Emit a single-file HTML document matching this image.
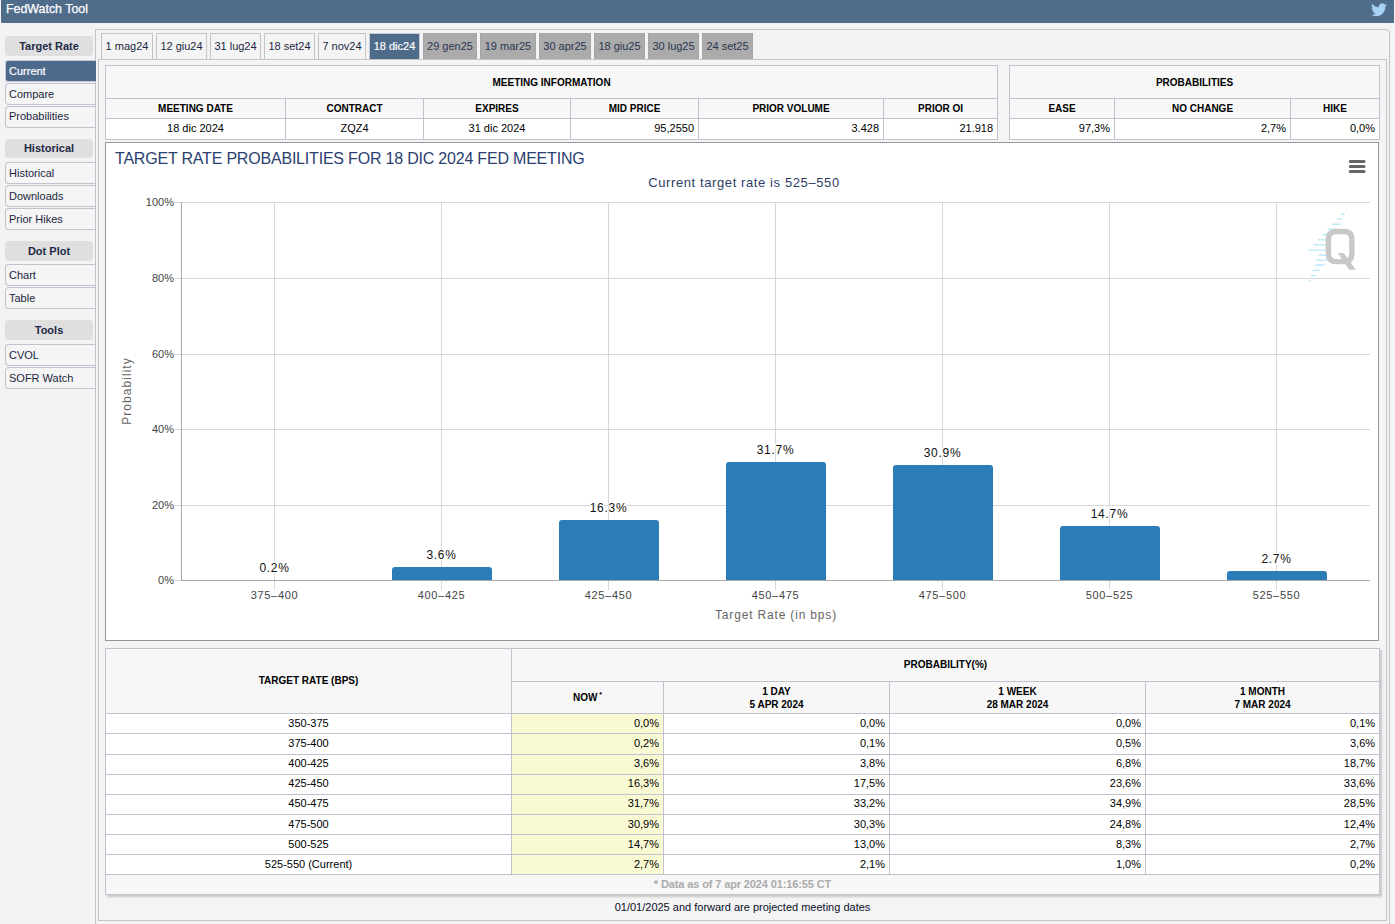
<!DOCTYPE html>
<html><head><meta charset="utf-8">
<style>
*{box-sizing:border-box;margin:0;padding:0}
html,body{width:1395px;height:924px;overflow:hidden;background:#F3F3F3;font-family:"Liberation Sans",sans-serif;font-size:11px;color:#000}
.abs{position:absolute}
#hdr{left:1px;top:0;width:1393px;height:23px;background:#506C8B;border-radius:0 0 1px 1px;color:#fff;font-size:12.4px;font-weight:normal;line-height:19px;padding-left:5px;-webkit-text-stroke:0.25px #fff}
.sh{position:absolute;left:5px;width:88px;height:20px;background:#DFDFDF;border-radius:4px;text-align:center;font-weight:bold;color:#1E2A48;line-height:20px;font-size:11px}
.si{position:absolute;left:5px;width:91px;height:22px;background:#F5F5F5;border:1px solid #C0C4D1;border-right:none;border-radius:4px 0 0 4px;z-index:1;color:#1B2740;padding-left:3px;line-height:21px;font-size:11px}
.si.act{background:#4E6A8B;border-color:#44638A;color:#fff;z-index:3;-webkit-text-stroke:0.2px #fff}
#outer{left:95px;top:29px;width:1295px;height:910px;border:1px solid #C0C4D1;border-radius:0 4px 0 0;background:#F3F3F3}
#oline{left:95px;top:29px;width:1px;height:900px;background:#C0C4D1;z-index:2}
#inner{left:98px;top:59px;width:1289px;height:862px;border:1px solid #C4C4C4;background:#F4F4F4}
.tab{position:absolute;top:33px;height:27px;border:1px solid #C4C4C4;border-bottom:none;background:#F4F4F4;color:#1C2842;text-align:center;line-height:25px;font-size:11px}
.tab.act{background:#4F6B8A;border-color:#C3CCD8;color:#fff;line-height:25px;-webkit-text-stroke:0.2px #fff}
.tab.g{background:#ABABAB;border-color:#A5A5A5;border-bottom:none;color:#2A3650;line-height:25px}
table{border-collapse:collapse;table-layout:fixed;position:absolute}
td,th{border:1px solid #C0C3CF;overflow:hidden;white-space:nowrap}
th{background:#F7F7F7;font-weight:bold;font-size:10px;color:#000}
td{background:#fff;font-size:11px;padding-bottom:2px}
.r{text-align:right;padding-right:4px}
.c{text-align:center}
#chart{left:105px;top:142px;width:1274px;height:499px;border:1px solid #969696;background:#fff}

svg text{font-family:"Liberation Sans",sans-serif}
.yl{font-size:11px;fill:#444}
.xl{font-size:11px;fill:#444;letter-spacing:0.7px}
.dl{font-size:12px;fill:#111;letter-spacing:0.7px;stroke:#fff;stroke-width:2px;paint-order:stroke;stroke-linejoin:round}
.ti{font-size:16px;fill:#2A4070;letter-spacing:-0.2px}
.st{font-size:13px;fill:#2E3D66;letter-spacing:0.6px}
.at{font-size:12px;fill:#666;letter-spacing:0.83px}
.at2{font-size:12px;fill:#666;letter-spacing:1.05px}
#pt{left:105px;top:648px;width:1274px;box-shadow:2px 2px 2px rgba(0,0,0,.18)}
#pt th{font-size:10px}
#pt td.y{background:#F9F9D3}
#pt tr.up td{padding-bottom:4px}
#pt td.f{background:#F7F7F7;color:#ABABAB;font-weight:bold;text-align:center;font-size:11px;letter-spacing:-0.12px}
#foot{left:98px;top:901px;width:1289px;text-align:center;font-size:11px;color:#0A0F2A}
</style></head><body>
<div id="hdr" class="abs">FedWatch Tool</div>
<svg class="abs" style="left:1371px;top:3px" width="16" height="14" viewBox="0 0 24 20"><path fill="#A6D3F4" d="M24 2.4c-.9.4-1.8.6-2.8.8 1-.6 1.8-1.6 2.2-2.7-1 .6-2 1-3.1 1.2C19.3.7 18 0 16.6 0c-2.7 0-4.9 2.2-4.9 4.9 0 .4 0 .8.1 1.1C7.7 5.8 4.1 3.9 1.7.9c-.4.7-.7 1.6-.7 2.5 0 1.7.9 3.2 2.2 4.1-.8 0-1.6-.2-2.2-.6v.1c0 2.4 1.7 4.4 3.9 4.8-.4.1-.8.2-1.3.2-.3 0-.6 0-.9-.1.6 2 2.4 3.4 4.6 3.4-1.7 1.3-3.8 2.1-6.1 2.1-.4 0-.8 0-1.2-.1 2.2 1.4 4.8 2.2 7.5 2.2 9.1 0 14-7.5 14-14v-.6c1-.7 1.8-1.6 2.5-2.5z"/></svg>

<div id="outer" class="abs"></div><div id="oline" class="abs"></div>

<div class="sh" style="top:36px">Target Rate</div>
<div class="si act" style="top:60px;height:22px;border:1px solid #C2C8D4;border-right:none;padding-left:3px;line-height:21px;border-radius:3px 0 0 3px">Current</div>
<div class="si" style="top:83px">Compare</div>
<div class="si" style="top:106px;line-height:19px">Probabilities</div>
<div class="sh" style="top:139px;height:19px;line-height:19px">Historical</div>
<div class="si" style="top:162px">Historical</div>
<div class="si" style="top:185px">Downloads</div>
<div class="si" style="top:208px">Prior Hikes</div>
<div class="sh" style="top:241px">Dot Plot</div>
<div class="si" style="top:264px">Chart</div>
<div class="si" style="top:287px">Table</div>
<div class="sh" style="top:320px">Tools</div>
<div class="si" style="top:344px">CVOL</div>
<div class="si" style="top:367px">SOFR Watch</div>

<div class="tab" style="left:101px;width:52px">1 mag24</div>
<div class="tab" style="left:156px;width:51px">12 giu24</div>
<div class="tab" style="left:210px;width:51px">31 lug24</div>
<div class="tab" style="left:264px;width:51px">18 set24</div>
<div class="tab" style="left:318px;width:48px">7 nov24</div>
<div class="tab act" style="left:369px;width:51px;top:33px;height:26px">18 dic24</div>
<div class="tab g" style="left:423px;width:54px;top:33px;height:26px">29 gen25</div>
<div class="tab g" style="left:480px;width:56px;top:33px;height:26px">19 mar25</div>
<div class="tab g" style="left:539px;width:52px;top:33px;height:26px">30 apr25</div>
<div class="tab g" style="left:594px;width:51px;top:33px;height:26px">18 giu25</div>
<div class="tab g" style="left:648px;width:51px;top:33px;height:26px">30 lug25</div>
<div class="tab g" style="left:702px;width:51px;top:33px;height:26px">24 set25</div>

<div id="inner" class="abs"></div>

<!-- meeting info -->
<table style="left:105px;top:65px;width:892px">
<colgroup><col style="width:180px"><col style="width:138px"><col style="width:147px"><col style="width:128px"><col style="width:185px"><col style="width:114px"></colgroup>
<tr style="height:33px"><th colspan="6" class="c">MEETING INFORMATION</th></tr>
<tr style="height:20px"><th class="c">MEETING DATE</th><th class="c">CONTRACT</th><th class="c">EXPIRES</th><th class="c">MID PRICE</th><th class="c">PRIOR VOLUME</th><th class="c">PRIOR OI</th></tr>
<tr style="height:21px"><td class="c">18 dic 2024</td><td class="c">ZQZ4</td><td class="c">31 dic 2024</td><td class="r">95,2550</td><td class="r">3.428</td><td class="r">21.918</td></tr>
</table>
<table style="left:1009px;top:65px;width:370px">
<colgroup><col style="width:105px"><col style="width:176px"><col style="width:89px"></colgroup>
<tr style="height:33px"><th colspan="3" class="c">PROBABILITIES</th></tr>
<tr style="height:20px"><th class="c">EASE</th><th class="c">NO CHANGE</th><th class="c">HIKE</th></tr>
<tr style="height:21px"><td class="r">97,3%</td><td class="r">2,7%</td><td class="r">0,0%</td></tr>
</table>

<div id="chart" class="abs"></div>
<svg class="abs" style="left:0;top:0" width="1395" height="924">
<path d="M175 202.5H1370" stroke="#D8D8D8" stroke-width="1"/>
<path d="M175 278.5H1370" stroke="#D8D8D8" stroke-width="1"/>
<path d="M175 354.5H1370" stroke="#D8D8D8" stroke-width="1"/>
<path d="M175 429.5H1370" stroke="#D8D8D8" stroke-width="1"/>
<path d="M175 505.5H1370" stroke="#D8D8D8" stroke-width="1"/>
<path d="M274.5 202V590" stroke="#D8D8D8" stroke-width="1"/>
<path d="M441.5 202V590" stroke="#D8D8D8" stroke-width="1"/>
<path d="M608.5 202V590" stroke="#D8D8D8" stroke-width="1"/>
<path d="M775.5 202V590" stroke="#D8D8D8" stroke-width="1"/>
<path d="M942.5 202V590" stroke="#D8D8D8" stroke-width="1"/>
<path d="M1109.5 202V590" stroke="#D8D8D8" stroke-width="1"/>
<path d="M1276.5 202V590" stroke="#D8D8D8" stroke-width="1"/>
<path d="M392 580V570Q392 567 395 567H489Q492 567 492 570V580Z" fill="#2A7DB6"/>
<path d="M559 580V523Q559 520 562 520H656Q659 520 659 523V580Z" fill="#2A7DB6"/>
<path d="M726 580V465Q726 462 729 462H823Q826 462 826 465V580Z" fill="#2A7DB6"/>
<path d="M893 580V468Q893 465 896 465H990Q993 465 993 468V580Z" fill="#2A7DB6"/>
<path d="M1060 580V529Q1060 526 1063 526H1157Q1160 526 1160 529V580Z" fill="#2A7DB6"/>
<path d="M1227 580V574Q1227 571 1230 571H1324Q1327 571 1327 574V580Z" fill="#2A7DB6"/>
<path d="M175 580.5H181" stroke="#D8D8D8" stroke-width="1"/><path d="M181.5 202V580" stroke="#A8A8A8" stroke-width="1"/>
<path d="M181 580.5H1370" stroke="#A8A8A8" stroke-width="1"/>
<text x="174" y="206" text-anchor="end" class="yl">100%</text>
<text x="174" y="282" text-anchor="end" class="yl">80%</text>
<text x="174" y="358" text-anchor="end" class="yl">60%</text>
<text x="174" y="433" text-anchor="end" class="yl">40%</text>
<text x="174" y="509" text-anchor="end" class="yl">20%</text>
<text x="174" y="584" text-anchor="end" class="yl">0%</text>
<text x="274.5" y="599" text-anchor="middle" class="xl">375&#8211;400</text>
<text x="441.5" y="599" text-anchor="middle" class="xl">400&#8211;425</text>
<text x="608.5" y="599" text-anchor="middle" class="xl">425&#8211;450</text>
<text x="775.5" y="599" text-anchor="middle" class="xl">450&#8211;475</text>
<text x="942.5" y="599" text-anchor="middle" class="xl">475&#8211;500</text>
<text x="1109.5" y="599" text-anchor="middle" class="xl">500&#8211;525</text>
<text x="1276.5" y="599" text-anchor="middle" class="xl">525&#8211;550</text>
<text x="274.5" y="572" text-anchor="middle" class="dl">0.2%</text>
<text x="441.5" y="559" text-anchor="middle" class="dl">3.6%</text>
<text x="608.5" y="512" text-anchor="middle" class="dl">16.3%</text>
<text x="775.5" y="454" text-anchor="middle" class="dl">31.7%</text>
<text x="942.5" y="457" text-anchor="middle" class="dl">30.9%</text>
<text x="1109.5" y="518" text-anchor="middle" class="dl">14.7%</text>
<text x="1276.5" y="563" text-anchor="middle" class="dl">2.7%</text>
<text x="115" y="164" class="ti">TARGET RATE PROBABILITIES FOR 18 DIC 2024 FED MEETING</text>
<text x="744" y="187" text-anchor="middle" class="st">Current target rate is 525&#8211;550</text>
<text x="776" y="619" text-anchor="middle" class="at">Target Rate (in bps)</text>
<text transform="translate(131 391) rotate(-90)" text-anchor="middle" class="at2">Probability</text>
<path d="M1350.3 161.5H1364" stroke="#666" stroke-width="3" stroke-linecap="round"/>
<path d="M1350.3 166.5H1364" stroke="#666" stroke-width="3" stroke-linecap="round"/>
<path d="M1350.3 171.5H1364" stroke="#666" stroke-width="3" stroke-linecap="round"/>
<path d="M1345.2 210.1L1346.1 208.5H1347.1L1346.2 210.1Z" fill="#C4E9FB"/>
<path d="M1340.8 214.9L1341.7 213.3H1345.1L1344.2 214.9Z" fill="#C4E9FB"/>
<path d="M1336.4 219.8L1337.3 218.2H1343.2L1342.3 219.8Z" fill="#C4E9FB"/>
<path d="M1331.5 225.0L1332.4 223.4H1340.9L1340.0 225.0Z" fill="#C4E9FB"/>
<path d="M1327.2 230.0L1328.1 228.4H1335.9L1335.0 230.0Z" fill="#C4E9FB"/>
<path d="M1322.3 235.4L1323.2 233.8H1327.9L1327.0 235.4Z" fill="#C4E9FB"/>
<path d="M1317.4 240.6L1318.3 239.0H1327.9L1327.0 240.6Z" fill="#C4E9FB"/>
<path d="M1313.0 245.6L1313.9 244.0H1327.9L1327.0 245.6Z" fill="#C4E9FB"/>
<path d="M1308.2 251.0L1309.1 249.4H1327.9L1327.0 251.0Z" fill="#C4E9FB"/>
<path d="M1318.4 255.9L1319.3 254.3H1327.9L1327.0 255.9Z" fill="#C4E9FB"/>
<path d="M1316.2 261.0L1317.1 259.4H1327.9L1327.0 261.0Z" fill="#C4E9FB"/>
<path d="M1314.5 265.9L1315.4 264.3H1325.1L1324.2 265.9Z" fill="#C4E9FB"/>
<path d="M1312.3 271.0L1313.2 269.4H1320.3L1319.4 271.0Z" fill="#C4E9FB"/>
<path d="M1310.1 276.3L1311.0 274.7H1315.9L1315.0 276.3Z" fill="#C4E9FB"/>
<path d="M1308.2 281.5L1309.1 279.9H1311.5L1310.6 281.5Z" fill="#C4E9FB"/>
<path d="M1336.4 231.5H1343.9Q1351.9 231.5 1351.9 239.5V253.6Q1351.9 261.6 1343.9 261.6H1336.4Q1328.4 261.6 1328.4 253.6V239.5Q1328.4 231.5 1336.4 231.5Z" fill="none" stroke="#C8C8C8" stroke-width="5.4"/>
<path d="M1337.9 253.1H1343.7L1355.9 269.7H1349.1Z" fill="#C8C8C8"/>
</svg>

<table id="pt">
<colgroup><col style="width:406px"><col style="width:152px"><col style="width:226px"><col style="width:256px"><col style="width:234px"></colgroup>
<tr style="height:33px"><th rowspan="2" class="c" style="padding-bottom:2px">TARGET RATE (BPS)</th><th colspan="4" class="c" style="padding-bottom:1px">PROBABILITY(%)</th></tr>
<tr style="height:32px"><th class="c" style="padding-bottom:2px">NOW<sup style="font-size:7px;vertical-align:4px;margin-left:2px">*</sup></th><th class="c" style="line-height:13px">1 DAY<br>5 APR 2024</th><th class="c" style="line-height:13px">1 WEEK<br>28 MAR 2024</th><th class="c" style="line-height:13px">1 MONTH<br>7 MAR 2024</th></tr>
<tr style="height:20px"><td class="c">350-375</td><td class="r y">0,0%</td><td class="r">0,0%</td><td class="r">0,0%</td><td class="r">0,1%</td></tr>
<tr style="height:21px"><td class="c">375-400</td><td class="r y">0,2%</td><td class="r">0,1%</td><td class="r">0,5%</td><td class="r">3,6%</td></tr>
<tr style="height:20px" class="up"><td class="c">400-425</td><td class="r y">3,6%</td><td class="r">3,8%</td><td class="r">6,8%</td><td class="r">18,7%</td></tr>
<tr style="height:20px" class="up"><td class="c">425-450</td><td class="r y">16,3%</td><td class="r">17,5%</td><td class="r">23,6%</td><td class="r">33,6%</td></tr>
<tr style="height:20px" class="up"><td class="c">450-475</td><td class="r y">31,7%</td><td class="r">33,2%</td><td class="r">34,9%</td><td class="r">28,5%</td></tr>
<tr style="height:20px"><td class="c">475-500</td><td class="r y">30,9%</td><td class="r">30,3%</td><td class="r">24,8%</td><td class="r">12,4%</td></tr>
<tr style="height:20px"><td class="c">500-525</td><td class="r y">14,7%</td><td class="r">13,0%</td><td class="r">8,3%</td><td class="r">2,7%</td></tr>
<tr style="height:20px"><td class="c">525-550 (Current)</td><td class="r y">2,7%</td><td class="r">2,1%</td><td class="r">1,0%</td><td class="r">0,2%</td></tr>
<tr style="height:20px"><td colspan="5" class="f">* Data as of 7 apr 2024 01:16:55 CT</td></tr>
</table>
<div id="foot" class="abs">01/01/2025 and forward are projected meeting dates</div>


</body></html>
